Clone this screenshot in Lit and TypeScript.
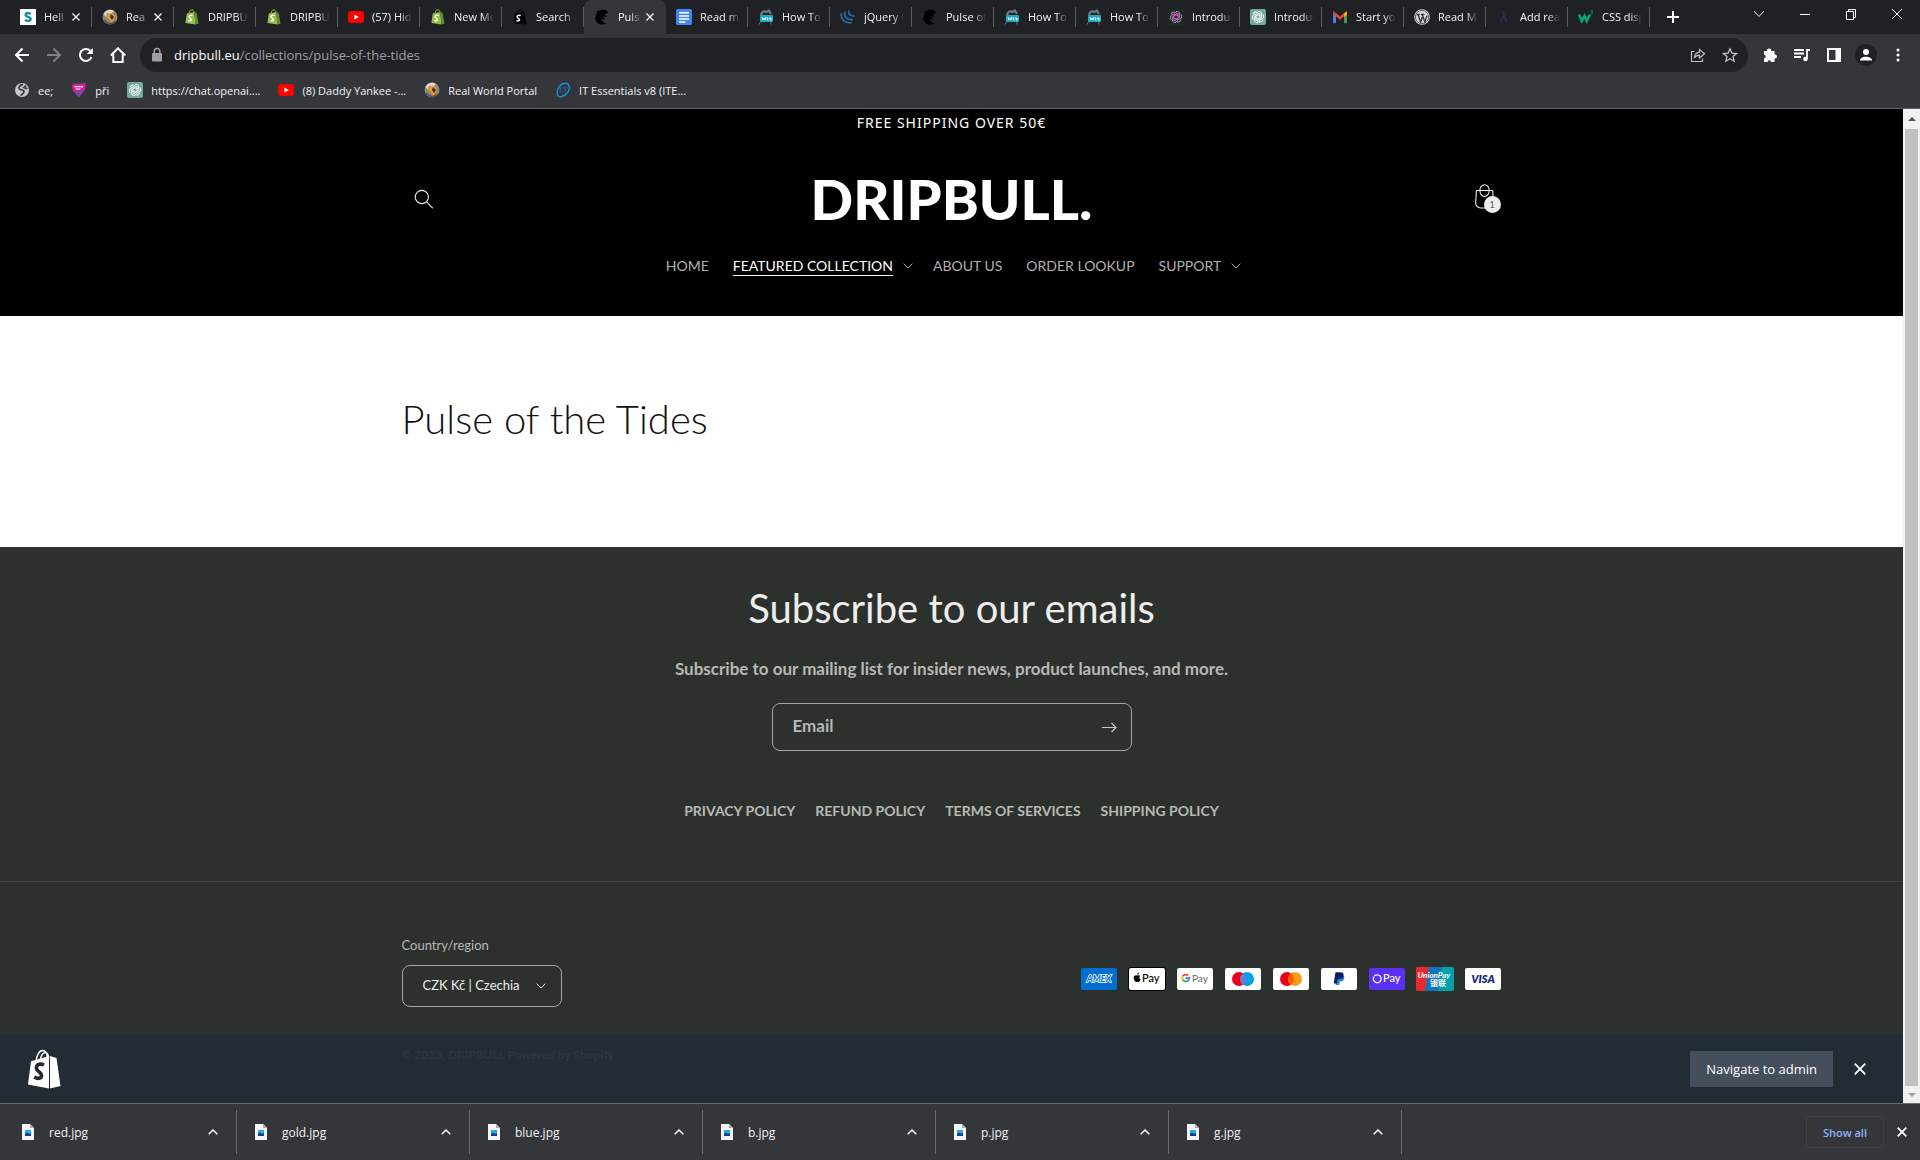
import { LitElement, html, css, svg, nothing } from "lit";
import { customElement } from "lit/decorators.js";
import { classMap } from "lit/directives/class-map.js";

const glyph = (box: string, body: unknown, cls = "i16") =>
  html`<svg class=${cls} viewBox=${box} aria-hidden="true">${body}</svg>`;

const swirl = (color: string) => svg`<g fill="none" stroke=${color} stroke-width="1">
  ${[0, 60, 120, 180, 240, 300].map(
    (a) => svg`<path transform="rotate(${a} 8 8)" d="M8 2.6a2.6 2.6 0 0 1 3.6 2.5v3.2L8 10.3"/>`,
  )}</g>`;

const bagShape = (back: string, side: string) => svg`
  <path d="M5 4.2C5.4 2 6.6.8 7.8.8s2 .9 2.3 2.6" fill="none" stroke=${back} stroke-width="1"/>
  <path d="M2.8 4.4 10.4 3l1 12.6L1.4 14z" fill=${back}/>
  <path d="m10.4 3 2.2.8 1.9 10.9-3.1.9z" fill=${side}/>
  <path d="M8.6 6.6C6.9 5.7 5 6.4 5.1 7.8c.1 1.5 2.5 1.5 2.4 3-.1 1.3-1.8 1.4-3 .5" fill="none" stroke="#fff" stroke-width="1.5"/>`;

const fav: Record<string, unknown> = {
  s: svg`<rect width="16" height="16" fill="#fff"/><path d="M10.8 5C9 3.600 5.600 3.900 5.600 5.900c0 2.400 5 1.600 5 4.200 0 2-3.300 2.400-5.500.9" fill="none" stroke="#0a9396" stroke-width="2.400"/>`,
  globe: svg`<circle cx="8" cy="8" r="7.500" fill="#8d8780"/><path d="M1.500 5A7 7 0 0 1 12 2L9 5 5 4 4 8z" fill="#ddd6cc"/><path d="M7 4l5 1 1 4-4 5-2-4-3-2z" fill="#f09a1c"/><path d="M9 5l3 3-2 3-2-3z" fill="#3b2d20"/><path d="M2 11c3 4 8 5 12 1" fill="none" stroke="#55504b" stroke-width="1.500"/>`,
  shop: bagShape("#95bf47", "#5e8e3e"),
  dark: bagShape("#050505", "#000"),
  yt: svg`<rect y="2" width="16" height="12" rx="3" fill="#f00"/><path d="M6.400 5.500v5L10.800 8z" fill="#fff"/>`,
  bull: svg`<path d="M3 1.500C5 2.500 6 .500 9 .500c3 0 4.500 1 5 3.500l-3.500 1L13 8l-4-.5L11 11l-3.500-1.500C8 12.500 10 14 12.500 14.500 8 16.500 3 15.500 1.500 11 .500 7 3.500 5 3 1.500z" fill="#000"/>`,
  docs: svg`<rect width="16" height="16" rx="1.500" fill="#4285f4"/><path d="M3 3.800h10M3 7h10M3 10h10M3 13h6.500" stroke="#fff" stroke-width="1.500"/>`,
  web: svg`<path d="M3.500 7c-1-3.500 2-5.500 5-4l2.500-1.500L13 5" fill="none" stroke="#6d7a80" stroke-width="2.200"/><rect x="2" y="6" width="13" height="7" rx="1" fill="#19a9c6"/><path d="M4 8l.800 3L6 9l1 2 .800-3M9.200 8.200v2.800h1.300M9.200 9.500h1.200M12 8v3h1.300V9.500H12" fill="none" stroke="#fff" stroke-width=".8"/><path d="M2.500 13 1 15.500M13 13v2.500" stroke="#6d7a80"/>`,
  jq: svg`<g fill="none" stroke="#1f6fb2" stroke-width="1.700"><path d="M1.500 4C0 10 5 15 12 13.500"/><path d="M5 2.500C3.500 7 7 11.500 13 10.500"/><path d="M9 1.500C8 4.500 10 7.500 14.500 7"/></g>`,
  gptp: svg`<rect width="16" height="16" fill="#17301c"/>${swirl("#d86fd2")}`,
  gpt: svg`<rect width="16" height="16" rx="2" fill="#74aa9c"/>${swirl("#fff")}`,
  gmail: svg`<path d="M2.500 13V4.500L8 9l5.500-4.500V13" fill="none" stroke="#ea4335" stroke-width="2.600"/><path d="M1.200 5v9.300h2.600V6.500z" fill="#4285f4"/><path d="M12.200 6.500v7.800h2.600V5z" fill="#34a853"/><path d="M12.200 4.200l2.600-1.400V6l-2.600 2z" fill="#fbbc04"/>`,
  wp: svg`<circle cx="8" cy="8" r="7.800" fill="#d8d8d8"/><circle cx="8" cy="8" r="6.600" fill="none" stroke="#333" stroke-width=".7"/><path d="M2.800 5.500h3M7 5.500h3.400M4 5.500l2.600 7.500L8.300 8M8.200 5.500l2.600 7.500 2.100-6.200" fill="none" stroke="#333" stroke-width="1.300"/>`,
  lam: svg`<path d="M6 2.500c2 0 1.500 3 4.500 11M8 6.500 4.500 13.500" fill="none" stroke="#2b2f63" stroke-width="1.300"/>`,
  w3: svg`<path d="M1 5.500 3.800 12l2.700-5 2.300 5L12 5.500" fill="none" stroke="#04aa6d" stroke-width="2.600"/><path d="M12.500 2h2.300l-1 1.300c1.200.2 1 2-1.300 1.500" fill="none" stroke="#04aa6d" stroke-width=".8"/>`,
  earth: svg`<circle cx="8" cy="8" r="7" fill="#c4c7cc"/><path d="M9 2.500C6 3 4 5 5.500 7c1 1.300 4 .5 4.500 2.300.3 1.500-1.500 2.700-3.500 4.200M12 3.500l-2 2 2 1 1.500-.5" fill="none" stroke="#3c3d41" stroke-width="1.800"/>`,
  pri: svg`<path d="M1.500 2 14.500 1 14 8l-6 7.500L2 9z" fill="#8e3bb0"/><path d="M1 3l13.500-1-.5 5.500L2 9z" fill="#e5197d"/><path d="M3.500 4.700h8.500M4.500 7h5" stroke="#fff" stroke-width="1.200"/>`,
  it: svg`<path d="M12 1.500C6 0 1 7 2.500 13c1 3 7 2 10.500-3 2-3 2-7-1-8.500z" fill="none" stroke="#1590d4" stroke-width="1.500"/><path d="M4.500 5.500h2M5.500 5.500v5.500M8 5.500h4.500M10.200 5.500V11" stroke="#1a5f92" stroke-width="1.500"/>`,
};

interface Tab { icon: string; title: string; close?: boolean; active?: boolean }

const tabs: Tab[] = [
  { icon: "s", title: "Hell", close: true },
  { icon: "globe", title: "Rea", close: true },
  { icon: "shop", title: "DRIPBU" },
  { icon: "shop", title: "DRIPBU" },
  { icon: "yt", title: "(57) Hid" },
  { icon: "shop", title: "New Me" },
  { icon: "dark", title: "Search r" },
  { icon: "bull", title: "Puls", close: true, active: true },
  { icon: "docs", title: "Read mo" },
  { icon: "web", title: "How To" },
  { icon: "jq", title: "jQuery C" },
  { icon: "bull", title: "Pulse of" },
  { icon: "web", title: "How To" },
  { icon: "web", title: "How To" },
  { icon: "gptp", title: "Introduc" },
  { icon: "gpt", title: "Introduc" },
  { icon: "gmail", title: "Start you" },
  { icon: "wp", title: "Read Mo" },
  { icon: "lam", title: "Add rea" },
  { icon: "w3", title: "CSS disp" },
];

const bookmarks = [
  ["earth", "ee;"],
  ["pri", "při"],
  ["gpt", "https://chat.openai...."],
  ["yt", "(8) Daddy Yankee -..."],
  ["globe", "Real World Portal"],
  ["it", "IT Essentials v8 (ITE..."],
];

const menu = [
  { label: "HOME" },
  { label: "FEATURED COLLECTION", current: true, more: true },
  { label: "ABOUT US" },
  { label: "ORDER LOOKUP" },
  { label: "SUPPORT", more: true },
];

const policies = ["PRIVACY POLICY", "REFUND POLICY", "TERMS OF SERVICES", "SHIPPING POLICY"];
const downloads = ["red.jpg", "gold.jpg", "blue.jpg", "b.jpg", "p.jpg", "g.jpg"];

const card = (fill: string) => svg`<rect x="1" y="1" width="36" height="22" rx="2" fill=${fill}/>`;

const payments: [string, unknown][] = [
  ["American Express", svg`${card("#006fcf")}<text x="19" y="15" text-anchor="middle" font-size="9" font-weight="700" font-style="italic" fill="#006fcf" stroke="#fff" stroke-width="1.400" paint-order="stroke">AMEX</text>`],
  ["Apple Pay", svg`<rect width="38" height="24" rx="3" fill="#000"/>${card("#fff")}<path d="M9.200 8.500c.9-.5 2.300-.5 3 .5-1.300.900-1.100 2.900.400 3.500-.6 1.600-1.500 2.600-2.300 2.400-.7-.3-1.100-.3-1.800 0-1.300.4-3-2.600-2.800-4.400.2-1.800 1.900-2.700 3.500-2z" fill="#000"/><path d="M9.200 7.700c0-1.100.7-1.900 1.700-2.100.1 1.100-.7 2-1.700 2.100z" fill="#000"/><text x="14" y="15" font-size="11" font-weight="500" fill="#000">Pay</text>`],
  ["Google Pay", svg`${card("#fff")}<g fill="none" stroke-width="1.800"><path d="M12.100 8.500A3.600 3.600 0 0 0 6.700 9.300" stroke="#ea4335"/><path d="M6.700 9.300a3.600 3.600 0 0 0 0 3.400" stroke="#fbbc04"/><path d="M6.700 12.700a3.600 3.600 0 0 0 5.200 1" stroke="#34a853"/><path d="M11.900 13.700a3.600 3.600 0 0 0 1.300-2.700H9.600" stroke="#4285f4"/></g><text x="16" y="15" font-size="10" fill="#5f6368">Pay</text>`],
  ["Maestro", svg`${card("#fff")}<circle cx="15" cy="12" r="7" fill="#eb001b"/><circle cx="23" cy="12" r="7" fill="#00a2e5"/><path d="M19 6.300a7 7 0 0 1 0 11.400 7 7 0 0 1 0-11.400z" fill="#7375cf"/>`],
  ["Mastercard", svg`${card("#fff")}<circle cx="15" cy="12" r="7" fill="#eb001b"/><circle cx="23" cy="12" r="7" fill="#f79e1b"/><path d="M19 6.300a7 7 0 0 1 0 11.400 7 7 0 0 1 0-11.400z" fill="#ff5f00"/>`],
  ["PayPal", svg`${card("#fff")}<path d="M16.800 8h4.900c2.300.3 3.100 1.900 2.400 4-.7 2-2.400 2.500-4.300 2.400l-.6 3.600h-3.600z" fill="#3086c8"/><path d="M15.500 5.300h5c2.400.1 3.600 1.500 3 3.900-.6 2.300-2.300 3-4.600 3h-1.300l-.700 4.300H13.700z" fill="#012169"/>`],
  ["Shop Pay", svg`${card("#5a31f4")}<path d="M5.200 7.700c1.500 0 2.200-.6 2.800-.6a3.900 3.900 0 1 1-2.900 1.600" transform="translate(1 .8)" fill="none" stroke="#fff" stroke-width="1.300"/><text x="15" y="15" font-size="11" font-weight="500" fill="#fff">Pay</text>`],
  ["Union Pay", svg`<rect width="38" height="24" rx="2" fill="#00a2a8"/><path d="M2 0h11L9 24H2a2 2 0 0 1-2-2V2a2 2 0 0 1 2-2z" fill="#e9292d"/><path d="M13 0h12.500L22 24H9z" fill="#0f76bc"/><text x="18" y="11" text-anchor="middle" font-size="8" font-weight="700" font-style="italic" fill="#fff">UnionPay</text><text x="22" y="19" text-anchor="middle" font-size="8" font-weight="700" fill="#fff">银联</text>`],
  ["Visa", svg`${card("#fff")}<text x="19" y="16" text-anchor="middle" font-size="11" font-weight="800" font-style="italic" fill="#142688">VISA</text>`],
];

const caret = glyph("0 0 10 6", svg`<path d="M.7.700 5 5 9.300.700" fill="none" stroke="currentColor"/>`, "caret");
const cross = glyph("0 0 8 8", svg`<path d="M.5.500l7 7M7.500.500l-7 7" fill="none" stroke="currentColor" stroke-width="1.400"/>`, "i8");

@customElement("app-root")
export class AppRoot extends LitElement {
  static styles = css`
    :host {
      display: flex;
      flex-direction: column;
      height: 100vh;
      overflow: hidden;
      font-family: "Open Sans", "Noto Sans", sans-serif;
      font-size: 12px;
      color: #f1f3f4;
      background: #35363a;
    }
    *, *::before, *::after { box-sizing: border-box; }
    button {
      display: inline-flex;
      align-items: center;
      justify-content: center;
      padding: 0;
      border: 0;
      background: none;
      color: inherit;
      font: inherit;
    }
    a { color: inherit; text-decoration: none; }
    h1, h2, p { margin: 0; font-weight: 400; }
    svg { display: block; flex: none; }
    .i8 { width: 8px; height: 8px; }
    .i16 { width: 16px; height: 16px; }
    .i20 { width: 20px; height: 20px; }
    .i44 { width: 44px; height: 44px; }
    .caret { width: 10px; height: 6px; }

    .strip { display: flex; height: 34px; padding-left: 10px; background: #202124; }
    .tab {
      position: relative;
      display: flex;
      flex: 0 1 82px;
      align-items: center;
      gap: 8px;
      min-width: 0;
      padding: 0 8px 0 10px;
    }
    .tab:not(.active)::after {
      content: "";
      position: absolute;
      right: 0;
      top: 7px;
      width: 1px;
      height: 20px;
      background: #5a5b5f;
    }
    .tab.active { background: #35363a; border-radius: 8px 8px 0 0; }
    .title {
      flex: 1;
      min-width: 0;
      overflow: hidden;
      white-space: nowrap;
      font-size: 11px;
      line-height: 16px;
      mask-image: linear-gradient(90deg, #000 calc(100% - 12px), transparent);
    }
    .tab button { width: 16px; height: 16px; margin-left: -8px; }
    .newtab { width: 46px; }
    .window { display: flex; margin-left: auto; height: 28px; }
    .window button { width: 46px; }

    .toolbar { display: flex; align-items: center; gap: 4px; padding: 4px 8px; }
    .toolbar > button { width: 28px; height: 28px; }
    .omnibox {
      display: flex;
      flex: 1;
      align-items: center;
      height: 34px;
      margin: 0 4px;
      padding: 0 2px 0 9px;
      border-radius: 17px;
      background: #202124;
    }
    .omnibox button { width: 32px; height: 28px; color: #bdc1c6; }
    .url {
      flex: 1;
      margin-left: 9px;
      font-size: 13px;
      color: #9aa0a6;
      white-space: nowrap;
    }
    .url b { font-weight: 400; color: #fff; }
    .avatar { display: grid; place-items: center; width: 22px; height: 22px; border-radius: 50%; background: #202124; }
    .bookmarks {
      display: flex;
      gap: 18px;
      height: 33px;
      padding: 0 14px 4px;
      align-items: center;
      border-bottom: 1px solid #5f6063;
      font-size: 11px;
    }
    .bookmarks a { display: flex; align-items: center; gap: 8px; }

    .view { display: flex; flex: 1; min-height: 0; }
    .page { position: relative; flex: 1; min-width: 0; overflow: hidden; background: #fff; font-family: Lato, "Open Sans", sans-serif; }
    .inner { max-width: 1100px; margin: 0 auto; }
    .announce { background: #000; color: #fff; text-align: center; font: 400 14px/28px "Noto Sans", sans-serif; letter-spacing: 1px; }
    .header { padding: 30px 0 40px; background: #000; color: #efecec; }
    .brandrow { display: grid; grid-template-columns: 1fr auto 1fr; align-items: center; }
    .brand { font-weight: 900; font-size: 56px; line-height: 64px; color: #fff; }
    .cart { position: relative; justify-self: end; margin-right: -4px; }
    .count {
      position: absolute;
      left: 22px;
      top: 19px;
      width: 17px;
      height: 17px;
      border-radius: 50%;
      background: #efecec;
      color: #555;
      font-size: 9px;
      line-height: 17px;
      text-align: center;
    }
    .menu { display: flex; justify-content: center; gap: 24px; margin-top: 25px; font-size: 14px; line-height: 20px; color: #b4b1b1; }
    .menu a { display: flex; align-items: center; gap: 10px; }
    .menu .caret { margin-right: -4px; }
    .menu .current span { color: #fff; text-decoration: underline; text-underline-offset: 4px; }

    .main { padding: 78px 0 102px; color: #121212; }
    .main h1 { font-weight: 300; font-size: 40px; line-height: 51px; }

    .footer { background: #2c312d; color: #b8b8b5; text-align: center; }
    .news { display: flex; flex-direction: column; align-items: center; padding: 35px 0 60px; }
    .news h2 { font-size: 40px; line-height: 52px; color: #efecec; }
    .news p { margin-top: 24px; font-weight: 700; font-size: 17px; line-height: 22px; }
    .email {
      display: flex;
      width: 360px;
      height: 48px;
      margin: 23px 0 50px;
      border: 1px solid #a3a5a1;
      border-radius: 8px;
    }
    .email input {
      flex: 1;
      min-width: 0;
      padding: 0 0 2px 20px;
      border: 0;
      outline: 0;
      background: none;
      color: inherit;
      font: 700 17px/22px Lato, sans-serif;
    }
    .email input::placeholder { color: #b8b8b5; opacity: 1; }
    .email button { width: 44px; }
    .policies { display: flex; gap: 20px; font-weight: 700; font-size: 14px; line-height: 20px; }
    .lower { border-top: 1px solid #3e433f; padding: 53px 0 60px; text-align: left; }
    .region { display: flex; justify-content: space-between; align-items: center; }
    .region label { display: block; margin-bottom: 10px; font-size: 13px; line-height: 20px; }
    .pick { display: grid; width: 160px; align-items: center; color: #efecec; }
    .pick > * { grid-area: 1 / 1; }
    .pick select {
      appearance: none;
      height: 42px;
      padding: 0 20px 3px;
      border: 1px solid #a3a5a1;
      border-radius: 8px;
      background: none;
      color: inherit;
      font: 400 13px/20px Lato, sans-serif;
    }
    .pick .caret { justify-self: end; margin-right: 16px; pointer-events: none; }
    .cards { display: flex; gap: 10px; margin: 16px 0 0; padding: 0; list-style: none; }
    .pay { width: 38px; height: 24px; font-family: Lato, "Noto Sans CJK SC", sans-serif; }
    .legal { margin-top: 38px; font-weight: 700; font-size: 12px; line-height: 20px; }

    .adminbar {
      position: absolute;
      inset: auto 0 0 0;
      display: flex;
      align-items: center;
      height: 68px;
      padding: 0 27px;
      background: rgba(34, 43, 53, 0.93);
      font-family: "Open Sans", sans-serif;
    }
    .bag { width: 34px; height: 40px; }
    .admin { margin-left: auto; height: 36px; padding: 0 16px; background: #454f5b; color: #fff; font-size: 13px; }
    .dismiss { width: 32px; height: 32px; margin-left: 11px; color: #fff; }
    .i12 { width: 12px; height: 12px; }

    .scroll { display: flex; flex-direction: column; align-items: center; width: 17px; background: #f1f1f1; color: #505050; }
    .scroll button { width: 17px; height: 20px; }
    .scroll button:last-child { height: 17px; color: #a3a3a3; }
    .thumb { flex: 1; width: 13px; background: #c1c1c1; }

    .shelf { display: flex; height: 57px; padding: 6px 0; align-items: center; border-top: 1px solid #6a6b6e; font-size: 12px; }
    .file { display: flex; flex: 0 1 233px; align-items: center; height: 44px; padding: 0 18px 0 16px; border-right: 1px solid #6a6b6e; }
    .file:first-child { flex-basis: 237px; padding-left: 20px; }
    .file span { flex: 1; margin-left: 13px; }
    .showall { margin-left: auto; height: 32px; padding: 0 16px; border: 1px solid #3f4043; border-radius: 4px; color: #8ab4f8; font-size: 11px; font-weight: 600; }
    .shelf .closeshelf { width: 24px; height: 24px; margin: 0 6px; }
    .i10 { width: 10px; height: 10px; }
  `;

  private renderTab(t: Tab) {
    const cls = { tab: true, active: !!t.active };
    return html`<div class=${classMap(cls)} role="tab" aria-selected=${t.active ? "true" : "false"}>
      ${glyph("0 0 16 16", fav[t.icon])}
      <span class="title">${t.title}</span>
      ${t.close ? html`<button aria-label="Close tab">${cross}</button>` : nothing}
    </div>`;
  }

  private renderChrome() {
    return html`
      <div class="strip" role="tablist">
        ${tabs.map((t) => this.renderTab(t))}
        <button class="newtab" aria-label="New tab">${glyph("0 0 16 16", svg`<path d="M8 2v12M2 8h12" stroke="#fff" stroke-width="2"/>`)}</button>
        <div class="window">
          <button aria-label="Search tabs">${glyph("0 0 16 16", svg`<path d="M3 5l5 5.500L13 5" fill="none" stroke="#ddd"/>`)}</button>
          <button aria-label="Minimize">${glyph("0 0 16 16", svg`<path d="M3 8.500h10" stroke="#fff"/>`)}</button>
          <button aria-label="Restore">${glyph("0 0 16 16", svg`<path d="M3.500 5.500h7v8h-7zM5.500 5.500v-2h7v8h-2" fill="none" stroke="#fff"/>`)}</button>
          <button aria-label="Close">${glyph("0 0 16 16", svg`<path d="M3 3l10 10M13 3L3 13" stroke="#fff"/>`)}</button>
        </div>
      </div>
      <div class="toolbar">
        <button aria-label="Back">${glyph("0 0 16 16", svg`<path d="M15 8H2.500M8.500 1.500 2 8l6.500 6.500" fill="none" stroke="#fff" stroke-width="2"/>`)}</button>
        <button aria-label="Forward">${glyph("0 0 16 16", svg`<path d="M1 8h12.500M7.500 1.500 14 8l-6.500 6.500" fill="none" stroke="#7f8084" stroke-width="2"/>`)}</button>
        <button aria-label="Reload">${glyph("0 0 16 16", svg`<path d="M13.500 10.200A6 6 0 1 1 12.300 3.800L14 5.500" fill="none" stroke="#fff" stroke-width="2"/><path d="M14.800 1v6h-6z" fill="#fff"/>`)}</button>
        <button aria-label="Home">${glyph("0 0 16 16", svg`<path d="M.8 8.500 8 1.300l7.200 7.200M3.300 7v8h9.400V7" fill="none" stroke="#fff" stroke-width="2"/>`)}</button>
        <div class="omnibox">
          ${glyph("0 0 16 16", svg`<rect x="3" y="6" width="10" height="8.500" rx="1" fill="#9aa0a6"/><path d="M5.200 6.500V4.300a2.800 2.800 0 0 1 5.600 0v2.200" fill="none" stroke="#9aa0a6" stroke-width="1.500"/>`)}
          <span class="url"><b>dripbull.eu</b>/collections/pulse-of-the-tides</span>
          <button aria-label="Share">${glyph("0 0 16 16", svg`<path d="M4.500 4.500h-3v10h11v-3M9.500 2.500v2.700C6.500 5.500 4.800 7.500 4.300 11c1.500-2 3-2.700 5.200-2.800V11L14.500 6.700z" fill="none" stroke="currentColor" stroke-width="1.200"/>`)}</button>
          <button aria-label="Bookmark">${glyph("0 0 16 16", svg`<path d="M8 1.800l1.900 4.300 4.700.4-3.600 3.100 1.100 4.600L8 11.800l-4.100 2.400L5 9.600 1.400 6.500l4.700-.4z" fill="none" stroke="currentColor" stroke-width="1.300"/>`)}</button>
        </div>
        <button aria-label="Extensions">${glyph("0 0 16 16", svg`<path d="M2 4h3.200a2 2 0 1 1 3.900 0H12.500v3.500a2 2 0 1 1 0 3.900V15H9.100a1.800 1.800 0 0 0-3.600 0H2v-3.600a1.800 1.800 0 0 0 0-3.600z" fill="#fff"/>`)}</button>
        <button aria-label="Media">${glyph("0 0 16 16", svg`<path d="M0 3h10M0 6.500h10M0 10h7M16 3h-3v9" fill="none" stroke="#fff" stroke-width="1.800"/><circle cx="11.500" cy="12" r="2.300" fill="#fff"/>`)}</button>
        <button aria-label="Side panel">${glyph("0 0 16 16", svg`<path d="M2 2h12v12H2z" fill="none" stroke="#fff" stroke-width="2"/><path d="M9.500 2H14v12H9.500z" fill="#fff"/>`)}</button>
        <button aria-label="Profile"><span class="avatar">${glyph("0 0 16 16", svg`<circle cx="8" cy="5" r="3" fill="#fff"/><path d="M2 13.500c0-5 12-5 12 0z" fill="#fff"/>`)}</span></button>
        <button aria-label="Menu">${glyph("0 0 16 16", svg`<g fill="#fff"><circle cx="8" cy="3" r="1.500"/><circle cx="8" cy="8" r="1.500"/><circle cx="8" cy="13" r="1.500"/></g>`)}</button>
      </div>
      <nav class="bookmarks" aria-label="Bookmarks">
        ${bookmarks.map(([icon, label]) => html`<a href="#">${glyph("0 0 16 16", fav[icon])}${label}</a>`)}
      </nav>`;
  }

  private renderHeader() {
    return html`
      <div class="announce">FREE SHIPPING OVER 50€</div>
      <header class="header">
        <div class="inner brandrow">
          <button class="i44" aria-label="Search">${glyph("0 0 18 19", svg`<path fill="#efecec" fill-rule="evenodd" d="M11.030 11.680A5.784 5.784 0 112.850 3.500a5.784 5.784 0 018.180 8.180zm.26 1.120a6.780 6.780 0 11.72-.7l5.400 5.400a.5.500 0 11-.71.700l-5.410-5.400z"/>`, "i20")}</button>
          <a class="brand" href="#">DRIPBULL.</a>
          <button class="i44 cart" aria-label="Cart">
            ${glyph("0 0 40 40", svg`<path fill="none" stroke="#efecec" d="M13.100 12.300h14.800l.7 11.100a4.500 4.500 0 0 1-4.500 4.800h-7.200a4.500 4.500 0 0 1-4.500-4.800z"/><ellipse fill="none" stroke="#efecec" cx="20.500" cy="12.300" rx="4.250" ry="5.300"/>`, "i44")}
            <span class="count">1</span>
          </button>
        </div>
        <nav class="menu" aria-label="Main">
          ${menu.map((m) => html`<a href="#" class=${classMap({ current: !!m.current })}><span>${m.label}</span>${m.more ? caret : nothing}</a>`)}
        </nav>
      </header>`;
  }

  private renderFooter() {
    return html`<footer class="footer">
      <div class="news">
        <h2>Subscribe to our emails</h2>
        <p>Subscribe to our mailing list for insider news, product launches, and more.</p>
        <div class="email">
          <input type="email" placeholder="Email" aria-label="Email" />
          <button aria-label="Subscribe">${glyph("0 0 16 16", svg`<path d="M1 8.500h14M10.500 4l4.500 4.500-4.500 4.500" fill="none" stroke="#c8c8c5" stroke-width="1.200"/>`)}</button>
        </div>
        <nav class="policies" aria-label="Policies">${policies.map((p) => html`<a href="#">${p}</a>`)}</nav>
      </div>
      <div class="lower">
        <div class="inner">
          <div class="region">
            <div>
              <label for="country">Country/region</label>
              <div class="pick">
                <select id="country"><option>CZK Kč | Czechia</option></select>
                ${caret}
              </div>
            </div>
            <ul class="cards">
              ${payments.map(([name, art]) => html`<li><svg class="pay" viewBox="0 0 38 24" role="img" aria-label=${name}>${art}</svg></li>`)}
            </ul>
          </div>
          <p class="legal">© 2023, <a href="#">DRIPBULL</a> <a href="#">Powered by Shopify</a></p>
        </div>
      </div>
    </footer>`;
  }

  render() {
    return html`
      ${this.renderChrome()}
      <div class="view">
        <div class="page">
          ${this.renderHeader()}
          <main class="main"><div class="inner"><h1>Pulse of the Tides</h1></div></main>
          ${this.renderFooter()}
          <div class="adminbar">
            ${glyph("0 0 34 40", svg`<path d="M9 13C9.500 6 12.500 1.500 15.500 1.500S20 4 20.500 9M13 12c.5-5 3-8.500 5-8.500 2.500 0 3.500 3 3.800 5.500" fill="none" stroke="#fff" stroke-width="1.500"/><path d="M4 12.300 22 7v32.500L1 35.500z" fill="#fff"/><path d="M23 7l6.500 2L33.500 37 23 39.500z" fill="#fff"/><path d="M17 16c-4-2-8-.5-7.500 3.500.4 3.200 5 3.500 5 7 0 3.500-4 3.500-7.300 1.500" fill="none" stroke="#222b35" stroke-width="3.600"/>`, "bag")}
            <button class="admin">Navigate to admin</button>
            <button class="dismiss" aria-label="Dismiss">${glyph("0 0 12 12", svg`<path d="M.7.700l10.600 10.600M11.300.700.700 11.300" stroke="currentColor" stroke-width="1.800"/>`, "i12")}</button>
          </div>
        </div>
        <div class="scroll">
          <button aria-label="Scroll up">${glyph("0 0 8 4", svg`<path d="M0 4h8L4 0z" fill="currentColor"/>`, "i8")}</button>
          <div class="thumb"></div>
          <button aria-label="Scroll down">${glyph("0 0 8 4", svg`<path d="M0 0h8L4 4z" fill="currentColor"/>`, "i8")}</button>
        </div>
      </div>
      <div class="shelf">
        ${downloads.map((d) => html`<div class="file">
          ${glyph("0 0 16 16", svg`<path d="M2 0h8l4 4v12H2z" fill="#f4f6f8"/><path d="M10 0v4h4z" fill="#a9adb2"/><path d="M5 6h6v6H5z" fill="#2aa6ea"/><path d="M5 10l2-1.500L9 10l2-1v3H5z" fill="#123f80"/>`)}
          <span>${d}</span>
          <button aria-label="Options">${glyph("0 0 10 6", svg`<path d="M.7 5.300 5 1l4.300 4.300" fill="none" stroke="#fff" stroke-width="1.500"/>`, "caret")}</button>
        </div>`)}
        <button class="showall">Show all</button>
        <button class="closeshelf" aria-label="Close downloads">${glyph("0 0 10 10", svg`<path d="M.7.700l8.600 8.600M9.300.700.700 9.300" stroke="#fff" stroke-width="1.700"/>`, "i10")}</button>
      </div>`;
  }
}
